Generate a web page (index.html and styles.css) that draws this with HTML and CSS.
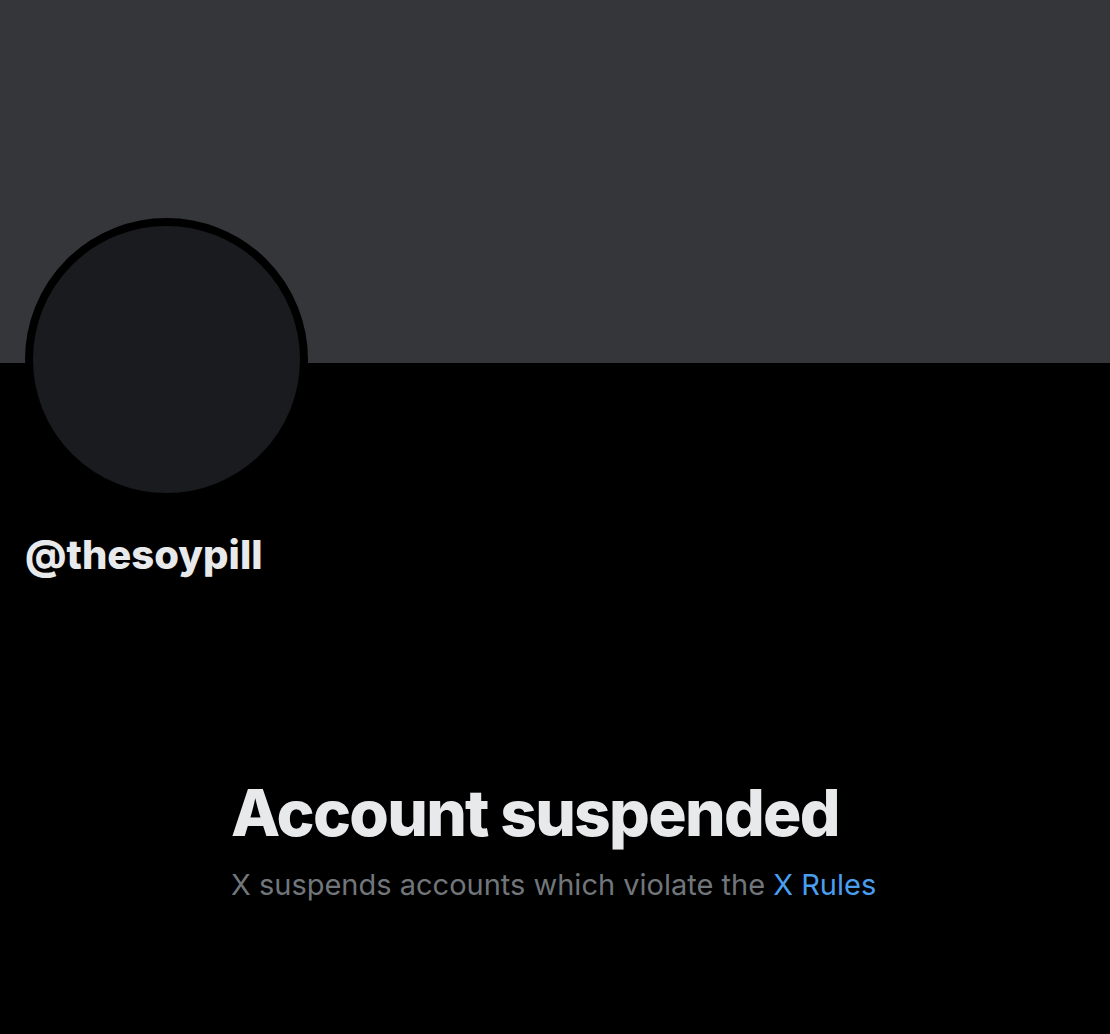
FILE: index.html
```html
<!DOCTYPE html>
<html lang="en">
<head>
<meta charset="utf-8">
<title>@thesoypill</title>
<link rel="stylesheet" href="styles.css">
</head>
<body>
<div class="page">
  <div class="banner"></div>
  <div class="profile">
    <div class="avatar"></div>
    <div class="handle">@thesoypill</div>
  </div>
  <div class="notice">
    <h1 class="notice-title">Account suspended</h1>
    <p class="notice-text">X suspends accounts which violate the <a class="notice-link" href="#">X Rules</a></p>
  </div>
</div>
</body>
</html>
```
FILE: styles.css
```css
html, body {
  margin: 0;
  padding: 0;
  background: #000;
}
.page {
  width: 1110px;
  height: 1034px;
  overflow: hidden;
  background: #000;
  font-family: Inter, "Liberation Sans", sans-serif;
}
.banner {
  height: 363px;
  background: #35363a;
}
.profile {
  padding-left: 25px;
}
.avatar {
  width: 267px;
  height: 267px;
  margin-top: -145px;
  border: 8px solid #000;
  border-radius: 50%;
  background: #1a1b1f;
}
.handle {
  margin-top: 30px;
  color: #e7e9ea;
  font-size: 40px;
  font-weight: 800;
  line-height: 48px;
  letter-spacing: 0;
}
.notice {
  margin-top: 195px;
  padding-left: 231px;
}
.notice-title {
  margin: 0;
  color: #e7e9ea;
  font-size: 64px;
  font-weight: 800;
  line-height: 78px;
  letter-spacing: -1.7px;
}
.notice-text {
  margin: 13px 0 0;
  color: #71767b;
  font-size: 29px;
  line-height: 40px;
}
.notice-link {
  color: #4a9ef0;
  text-decoration: none;
}
```
